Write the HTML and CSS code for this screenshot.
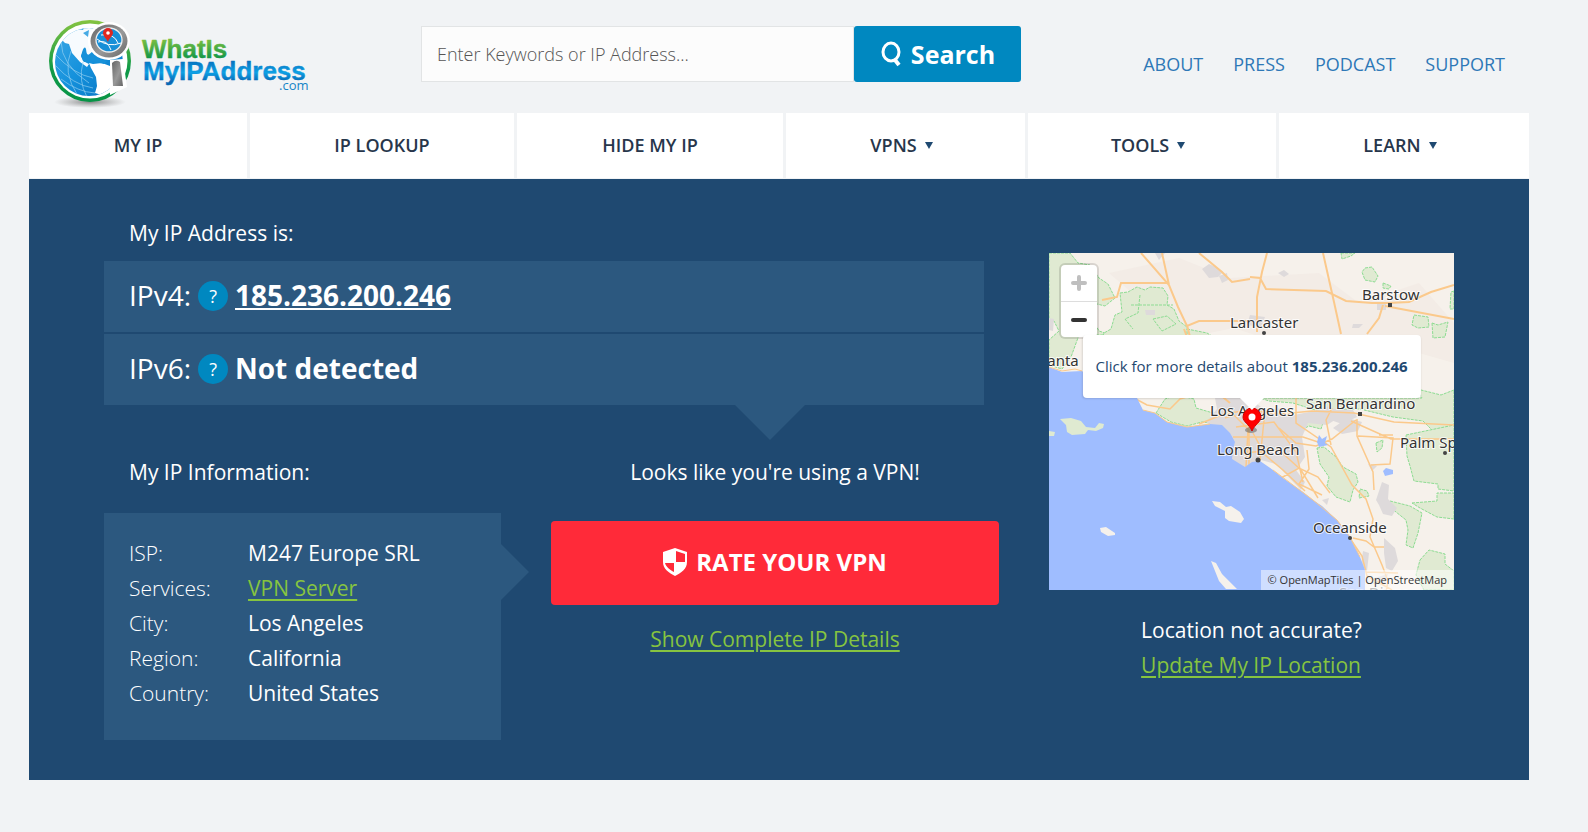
FILE: index.html
```html
<!DOCTYPE html>
<html lang="en">
<head>
<meta charset="utf-8">
<meta name="viewport" content="width=device-width, initial-scale=1">
<title>What Is My IP Address</title>
<link rel="stylesheet" href="styles.css">
</head>
<body>
<div class="page">
  <header class="header">
    <a class="logo" href="#" aria-label="WhatIsMyIPAddress.com">
      <svg width="262" height="90" viewBox="0 0 262 90">
        <defs>
          <linearGradient id="ring" x1="0" y1="0" x2="0" y2="1"><stop offset="0" stop-color="#86c440"/><stop offset=".6" stop-color="#0f9a48"/><stop offset="1" stop-color="#079447"/></linearGradient>
          <linearGradient id="sea" x1="0" y1="0" x2="1" y2="1"><stop offset="0" stop-color="#3ba8e6"/><stop offset=".5" stop-color="#1491dc"/><stop offset="1" stop-color="#0871bf"/></linearGradient>
          <linearGradient id="metal" x1="0" y1="0" x2="1" y2="1"><stop offset="0" stop-color="#666"/><stop offset=".55" stop-color="#999"/><stop offset="1" stop-color="#666"/></linearGradient>
          <linearGradient id="green" x1="0" y1="0" x2="0" y2="1"><stop offset=".15" stop-color="#80c141"/><stop offset=".85" stop-color="#0c9448"/></linearGradient>
          <linearGradient id="blue" x1="0" y1="0" x2="0" y2="1"><stop offset=".15" stop-color="#0670bd"/><stop offset=".55" stop-color="#0ea0e4"/><stop offset=".85" stop-color="#0768b5"/></linearGradient>
          <radialGradient id="shade"><stop offset="0" stop-color="#666" stop-opacity=".75"/><stop offset="1" stop-color="#888" stop-opacity="0"/></radialGradient>
          <clipPath id="globe"><circle cx="40" cy="42" r="34"/></clipPath>
        </defs>
        <ellipse cx="41" cy="82" rx="36" ry="6" fill="url(#shade)"/>
        <circle cx="41" cy="41" r="41" fill="url(#ring)"/>
        <circle cx="41" cy="41" r="37.500" fill="#fff"/>
        <g clip-path="url(#globe)">
          <rect x="5" y="7" width="70" height="70" fill="url(#sea)"/>
          <path d="M14 19 24 10 38 5h37v22L60 40l-9-4-5-6-2-3-2 9-4-2-3-5-3 7 2 5 6 3-2 3-7-5-8-9-3-9-4-1-4-4z" fill="#f7fbfe"/>
          <path d="M34 13l6-3-1 7zM28 9l8-3-2 4z" fill="#47aae4"/>
          <path d="M44 44l9-1 8 3 14 5v16l-13 11-16-5 2-7-1-9-5-9-2-5z" fill="#fff"/>
          <path d="M6 34q18 20 38 24M12 59q17 13 34 14M22 31q-9 21 7 45M6 45q18 20 38 23M34 42q-5 19 4 35M12 21q0 24 28 42" fill="none" stroke="#91cff1" stroke-width=".7"/>
        </g>
        <path d="M32 36q3-12 5-7l1 7 5-4 3 6 12 3-3 3-13-3-7 1z" fill="#1791d9"/>
        <ellipse cx="60" cy="21" rx="21" ry="19" fill="#fff"/>
        <ellipse cx="60" cy="21" rx="18.500" ry="16.500" fill="url(#metal)"/>
        <ellipse cx="60" cy="20" rx="13" ry="12" fill="#188fd7" stroke="#eee" stroke-width="1.300"/>
        <path d="M49 22q9-3 13 8M52 15q13-2 17 8M48 19q11 9 24 4" fill="none" stroke="#fff" stroke-width="1"/>
        <path d="M59 22c-2-4-5-6-5-9a5 5 0 0 1 10 0c0 3-4 5-5 9z" fill="#df2720"/><circle cx="59" cy="13" r="1.800" fill="#fff"/>
        <path d="M61 40l13-1 4 28-17 8z" fill="#fff"/>
        <path d="M63 43q4-4 8-1l3 24H64z" fill="url(#metal)"/>
        <text x="93" y="38" class="logo-word" fill="url(#green)" stroke="url(#green)">WhatIs</text>
        <text x="94" y="60" class="logo-word" fill="url(#blue)" stroke="url(#blue)">MyIPAddress</text>
        <text x="230" y="70" class="logo-com">.com</text>
      </svg>
    </a>
    <form class="search" role="search" onsubmit="return false">
      <input class="search-input" type="text" aria-label="Search" placeholder="Enter Keywords or IP Address...">
      <button class="search-button" type="submit">
        <svg width="24" height="28" viewBox="0 0 24 28" fill="none" stroke="#fff"><ellipse cx="11" cy="12" rx="8" ry="9" stroke-width="3"/><path d="M15 20l4 5" stroke-width="4"/></svg>
        Search
      </button>
    </form>
    <nav class="links" aria-label="Site">
      <a href="#">ABOUT</a><a href="#">PRESS</a><a href="#">PODCAST</a><a href="#">SUPPORT</a>
    </nav>
  </header>

  <nav class="menu" aria-label="Main">
    <a href="#">MY IP</a>
    <a href="#">IP LOOKUP</a>
    <a href="#">HIDE MY IP</a>
    <a class="has-menu" href="#">VPNS <span class="caret"></span></a>
    <a class="has-menu" href="#">TOOLS <span class="caret"></span></a>
    <a class="has-menu" href="#">LEARN <span class="caret"></span></a>
  </nav>

  <main class="hero">
    <div class="details">
      <section>
        <h2 class="label">My IP Address is:</h2>
        <div class="addresses">
          <div class="address">IPv4: <button class="help" type="button" aria-label="About IPv4">?</button> <a href="#">185.236.200.246</a></div>
          <div class="address">IPv6: <button class="help" type="button" aria-label="About IPv6">?</button> <strong>Not detected</strong></div>
        </div>
      </section>
      <div class="lower">
        <section>
          <h2 class="label">My IP Information:</h2>
          <dl class="info">
            <dt>ISP:</dt><dd>M247 Europe SRL</dd>
            <dt>Services:</dt><dd><a class="green" href="#">VPN Server</a></dd>
            <dt>City:</dt><dd>Los Angeles</dd>
            <dt>Region:</dt><dd>California</dd>
            <dt>Country:</dt><dd>United States</dd>
          </dl>
        </section>
        <section class="vpn">
          <h2>Looks like you're using a VPN!</h2>
          <button class="rate" type="button">
            <svg width="24" height="28" viewBox="0 0 24 28"><path d="M12 0 24 4v10c0 7-6 11-12 14C6 25 0 21 0 14V4z" fill="#fff"/><path d="M13 3l9 3v8h-9zM11 15v9c-4-2-8-5-9-9z" fill="#ff2a39"/></svg>
            RATE YOUR VPN
          </button>
          <a class="green" href="#">Show Complete IP Details</a>
        </section>
      </div>
    </div>

    <aside class="side">
      <div class="map">
        <svg class="map-art" viewBox="0 0 405 337" preserveAspectRatio="xMidYMid slice" role="img" aria-label="Map of Los Angeles">
          <rect width="405" height="337" fill="#f6f1eb"/>
          <path d="M60 20 130 5l50 20 90-5 40 30 60-20 35 40v40l-70-20-60 15-90-30-50 10z" fill="#f3ece6"/>
          <g fill="#e0ead2" stroke="#8ddc92" stroke-width="1" stroke-dasharray="3 1">
            <path d="M0 0H21l8 10 12 2 9 13 9 6 7 14-10 8-12-3-2 14 8 14 12 4H30l-8 22-9 12-13-4V87l10-9-5-10-5-2z"/>
            <path d="M71 40l8-1 9-5 8 3 5-3 13 1 5 8-1 9 7 4 5 12 8 6 2 16H51l4-10 7-4 4-14 7-3z"/>
            <path d="M138 76l20 4 16 10H138z"/>
            <path d="M91 42l-2 18-13 6 8 10M82 52h42M104 66l14-3 9 8-14 7z" fill="none"/>
            <path d="M107 160l9-14 12-4 17 4 2 9 17 5 8 7-2 4-17-2-15 4-16-4z"/>
            <path d="M211 145h162l-5-9 24 6 13-5v46l-15 1-16-16-30-4-33-8-45 1-22-7-24-2z"/>
            <path d="M292 0h14l-4 3-9 3z"/><path d="M316 15l7-1 6 9-3 6-10-2-3-8z"/><path d="M334 30l8 3-2 3-6-1z"/>
            <path d="M365 62l14 2 1 10-11 1-6-3zM383 70l6 2 10-3-3 15-12 1zM405 38l-3 1-1 17h4z"/>
            <path d="M248 171l14-10 12 9-2 6-12-3-6 3z"/>
            <path d="M268 195l7-1 12 10 7 10 13 7 2 8-5 8-3 12-14-5-9-11 2-9-9-13z"/>
            <path d="M311 236l7 2 2 5-10 2zM327 190l7-3-1 8-5 4z"/>
            <path d="M357 182l48-10v66l-16-2v-5l-24-3-4-15-3-10zM363 250l25-2v-8h17v26l-17-2-17-9z"/>
            <path d="M341 248l20 5 12 7-4 20-5 15-7-3 2-15-2-10-15-12zM371 307l9-10 16 4v10l9 7v19h-30l-8-15z"/>
          </g>
          <g fill="#dedadb">
            <path d="M166 145h34l16 12 18-2 6 8 25-5 15-5 12 10-14 9-19-2-6 14 3 20-9 13 9 12-4 8-25-26-15-4-16 10-16-8 2-17-7-10-18-13 11-13z"/>
            <path d="M153 16l7-5 9 4 5 4-5 5-9 1zM170 23l8-3 1 7-6 3zM106 0h10l-6 7zM229 20l6-3 5 4-5 3zM96 57h10v5H97zM304 71h10l-4 4h-7zM328 50h9v7h-9z"/>
            <path d="M333 229l7 3-1 14 9 9-5 8-9-2-4-9-3-5zM335 285l11 10 3 13-6 10-6-3-2-15zM314 298l6 2-2 18-6-6zM319 211l9 2-5 5zM274 155l30 2 4 7-15 7-20-7zM284 175l14-10 15 4-4 9-16 3zM0 65l5 1-1 12-4-1zM201 62l15 2-4 10-14-2zM273 247l7-2-2 7zM325 325l14-4-3 10h-12z"/>
          </g>
          <g fill="none" stroke="#fbc98b" stroke-width="2">
            <path d="M92 0l28 32 9 22 9 19 12-5h50M113 0l7 32M120 30H72l-4 14-15 3M138 72l3 12M135 76l9 24 25 40 12 10M201 24l10 1 6 11 60 2 20 10 26 2h16l21-1 22-10 23-7M218 0l-5 19-5 25v35M274 0l11 49 7 32M334 52l-4 13-12 16M336 53l69 13M150 0l23 19 10 10 18-3"/>
          </g>
          <g fill="none" stroke="#fbc98b" stroke-width="1.500">
            <path d="M85 145l13 7 23 4 10-10 17-5M150 171l25-10 24-4 33 4 31-3 42 2 40 9 60 3M176 165l9-3 14 14-2 38M200 155v60M216 157l-5 50M184 184h70l21 7M193 200l37-3 22 20 17 28M232 225l18-10 19 9 12 16M187 174l38-5 22 30 7 30M204 180l12 22 18 15 22 21M230 175l17 15 20 3 16-7 24-19M247 145v25l35 24 21 38 14 14 7 20-3 18 12 28 6 16-3 17M308 166v17l16 36 1 18M282 192l-5-25 6-12M330 182h14M309 183l35 2-3 26-19 1M302 168l40 18h63M258 197l2 19-10 15 23 11M304 285l13 3 8 6h10M300 284l13 19 5 20 25 14M317 319l32 1"/>
          </g>
          <path class="water" d="M0 114l13 5 20-1 20 18 35 9 6 12 12 3 12 9 20 5 23-3 12 1 8 8 5 9-2 7-1 10 13 8 7-5 8-1 13 9 10 8 10 7 10 7 10 8 9 6 15 14 13 17 10 20 5 13v20H0z"/>
          <path class="water" d="M270 182l3 4 5-3-2 7 3 2-9 2-2-5zM334 218l3-3 7 2v4l-8 2z"/>
          <path d="M0 114l13 4 13-2 7 2M94 157l12 3 12 9 20 5 23-3M224 217l20 15 20 15 24 20 13 17 10 20" fill="none" stroke="#fbc98b" stroke-width="1"/>
          <path d="M11 166l11-1 10 3 5 6 9 1 4-5 5 1-1 4-7 3-8-1-3 4-13 1-5-3-1-7zM0 178l6 1-1 4H0z" fill="#dfead1"/>
          <path d="M51 275l6-1 9 6v2l-7 1-7-4zM163 248l8 1 6 5 5-1 9 6 4 7-3 4-12-2-4-3v-7l-10-5zM162 308l5 2 6 11 15 15h-11l-7-8z" fill="#f5f1ec"/>
          <g fill="#444"><rect x="339" y="50" width="4" height="4"/><circle cx="215" cy="80" r="2"/><rect x="309" y="159" width="4" height="4"/><circle cx="209" cy="207" r="2.500"/><circle cx="301" cy="285" r="2"/><circle cx="396" cy="200" r="2"/></g>
          <ellipse cx="202" cy="177" rx="6" ry="3" fill="#555" opacity=".5"/>
          <g class="places"><text x="313" y="47">Barstow</text><text x="181" y="75">Lancaster</text><text x="-10" y="113">Santa Barbara</text><text x="161" y="163">Los Angeles</text><text x="257" y="156">San Bernardino</text><text x="168" y="202">Long Beach</text><text x="351" y="195">Palm Springs</text><text x="264" y="280">Oceanside</text><text x="290" y="345" opacity=".6">San Diego</text></g>
          <path d="M203 178c-3-7-9-9-9-14a9 9 0 0 1 18 0c0 5-6 7-9 14z" fill="#f00" stroke="#d00000"/><circle cx="203" cy="164" r="3.500" fill="#fff"/>
        </svg>
        <div class="zoom">
          <button type="button" disabled aria-label="Zoom in"><svg width="16" height="16"><path d="M8 2v12M2 8h12" stroke="#bfbfbf" stroke-width="4" stroke-linecap="round"/></svg></button>
          <button type="button" aria-label="Zoom out"><svg width="16" height="16"><path d="M2 8h12" stroke="#333" stroke-width="4" stroke-linecap="round"/></svg></button>
        </div>
        <a class="popup" href="#">Click for more details about <strong>185.236.200.246</strong></a>
        <div class="credit"><a href="#">© OpenMapTiles</a> | <a href="#">OpenStreetMap</a></div>
      </div>
      <p class="accuracy">Location not accurate?<br><a class="green" href="#">Update My IP Location</a></p>
    </aside>
  </main>
</div>
</body>
</html>
```
FILE: styles.css
```css
* { box-sizing: border-box; }

body {
  margin: 0;
  background: #f1f3f5;
  color: #fff;
  font: 21px/35px "Open Sans", sans-serif;
}

h2, p, dl, dd { margin: 0; font-size: 21px; font-weight: 400; }
button, input { font-family: inherit; }
a { color: inherit; }

.page {
  max-width: 1558px;
  padding: 0 29px;
  margin-right: auto;
}

.header {
  display: grid;
  grid-template-columns: 352px minmax(300px, 600px) 1fr;
  gap: 20px;
  height: 113px;
  padding: 20px 24px 0 20px;
}
.logo svg { display: block; }
.logo-word { font: bold 26px "Liberation Sans", sans-serif; stroke-width: 0.4px; stroke-linejoin: round; }
.logo-com { font: 13px "Open Sans", sans-serif; fill: #1684c7; }

.search { display: flex; height: 56px; margin-top: 6px; }
.search-input {
  flex: 1;
  min-width: 0;
  padding: 0 15px;
  border: 1px solid #e2e4e5;
  background: #fcfcfc;
  color: #555;
  font-size: 18px;
  font-weight: 300;
}
.search-input::placeholder { color: #555; opacity: 1; }
.search-button {
  display: flex;
  align-items: center;
  justify-content: center;
  gap: 7px;
  width: 167px;
  padding: 0;
  border: 0;
  border-radius: 3px;
  background: #0088c0;
  color: #fff;
  font-size: 25px;
  font-weight: 700;
}

.links {
  display: flex;
  justify-content: flex-end;
  gap: 30px;
  padding-top: 27px;
  font-size: 18px;
}
.links a { color: #2e78b7; text-decoration: none; font-weight: 500; }

.menu {
  display: grid;
  grid-template-columns: 218fr 264fr 266fr 239fr 248fr 250fr;
  gap: 3px;
  padding-bottom: 1px;
}
.menu a {
  display: flex;
  align-items: center;
  justify-content: center;
  gap: 8px;
  height: 65px;
  background: #fff;
  color: #27364b;
  font-size: 18px;
  font-weight: 600;
  text-decoration: none;
}
.menu .has-menu { padding-right: 8px; }
.caret { border: 4px solid transparent; border-top: 7px solid #1f4971; border-bottom: 0; }

.hero {
  display: grid;
  grid-template-columns: minmax(0, 895fr) minmax(0, 405fr);
  gap: 50px;
  padding: 37px 75px 40px;
  background: #1f4971;
}
.label { padding-left: 25px; }

.addresses {
  position: relative;
  display: grid;
  gap: 2px;
  margin: 10px 15px 50px 0;
}
.addresses::after {
  content: "";
  position: absolute;
  top: 100%;
  left: calc(75% - 29px);
  border: 35px solid transparent;
  border-top-color: #2c587f;
  border-bottom: 0;
}
.address {
  display: flex;
  align-items: center;
  gap: 7px;
  height: 71px;
  padding: 0 25px 2px;
  background: #2c587f;
  font-size: 28px;
}
.address a, .address strong { font-weight: 700; }
.help {
  width: 30px;
  height: 30px;
  padding: 0;
  border: 0;
  border-radius: 50%;
  background: #0088c0;
  color: #fff;
  font-size: 18px;
}

.lower {
  display: grid;
  grid-template-columns: minmax(0, 397fr) minmax(0, 448fr);
  gap: 50px;
}
.info {
  position: relative;
  display: grid;
  grid-template-columns: 119px 1fr;
  margin-top: 23px;
  padding: 23px 25px 29px;
  background: #2c587f;
}
.info::after {
  content: "";
  position: absolute;
  left: 100%;
  top: 31px;
  border: 28px solid transparent;
  border-left-color: #2c587f;
  border-right: 0;
}
.info dt { font-weight: 300; }
.green { color: #86c440; text-underline-offset: 3px; text-decoration-thickness: 2px; }

.vpn { display: flex; flex-direction: column; align-items: center; }
.rate {
  display: flex;
  align-items: center;
  justify-content: center;
  gap: 9px;
  width: 100%;
  height: 84px;
  margin: 31px 0 17px;
  padding: 0 0 3px;
  border: 0;
  border-radius: 4px;
  background: #ff2a39;
  color: #fff;
  font-size: 24px;
  font-weight: 700;
}

.side { padding-top: 37px; }
.map { position: relative; aspect-ratio: 405 / 337; overflow: hidden; }
.map-art { display: block; width: 100%; height: 100%; }
.water { fill: #9fbdff; }
.places { font: 15px "Noto Sans", sans-serif; fill: #333; stroke: #fff; stroke-opacity: .8; stroke-width: 2px; paint-order: stroke; }
.zoom {
  position: absolute;
  top: 12px;
  left: 12px;
  width: 36px;
  border-radius: 4px;
  background: #fff;
  box-shadow: 0 0 0 2px rgba(0, 0, 0, .12);
}
.zoom button {
  display: flex;
  align-items: center;
  justify-content: center;
  width: 36px;
  height: 36px;
  padding: 0;
  border: 0;
  background: none;
}
.zoom button + button { border-top: 1px solid #ddd; }
.popup {
  position: absolute;
  top: 82px;
  left: 50%;
  transform: translateX(-50%);
  padding: 14px 13px;
  border-radius: 4px;
  background: #fff;
  box-shadow: 0 1px 2px rgba(0, 0, 0, .12);
  color: #1f4971;
  font-size: 15px;
  text-decoration: none;
  white-space: nowrap;
}
.popup::after {
  content: "";
  position: absolute;
  top: 100%;
  left: calc(50% - 12px);
  border: 12px solid transparent;
  border-top-color: #fff;
  border-bottom: 0;
}
.credit {
  position: absolute;
  right: 0;
  bottom: 0;
  padding: 0 7px;
  background: rgba(255, 255, 255, .5);
  color: #333;
  font-size: 11px;
  line-height: 20px;
}
.credit a { text-decoration: none; }
.accuracy { width: fit-content; margin: 23px auto 0; }
```
